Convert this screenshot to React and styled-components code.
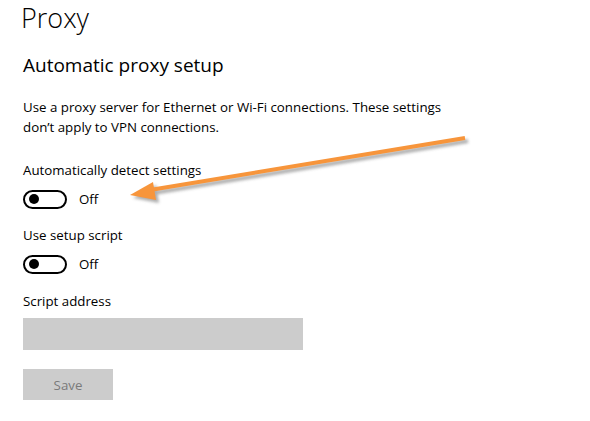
import React from "react"
import styled, { createGlobalStyle } from "styled-components"

const GlobalStyle = createGlobalStyle`
  * {
    margin: 0;
    padding: 0;
    box-sizing: border-box;
  }
  body {
    background: #ffffff;
    font-family: "Open Sans", "Noto Sans", sans-serif;
    color: #000000;
  }
`

const Page = styled.main`
  position: relative;
  width: 590px;
  height: 421px;
  padding: 0 0 0 23px;
  display: flex;
  flex-direction: column;
  align-items: flex-start;
  overflow: hidden;
`

const Title = styled.h1`
  font-size: 27px;
  font-weight: 300;
  line-height: 36px;
  margin-left: -2px;
`

const Subtitle = styled.h2`
  font-size: 19px;
  font-weight: 400;
  line-height: 26px;
  margin-top: 16px;
`

const Text = styled.p`
  font-size: 13.3px;
  line-height: 20px;
  margin-top: ${(p) => p.$top || 0}px;
  color: ${(p) => (p.$muted ? "#7a7a7a" : "#000")};
`

const ToggleRow = styled.div`
  display: flex;
  align-items: center;
  gap: 12px;
  margin-top: ${(p) => p.$top || 0}px;
`

const Track = styled.span`
  width: 44px;
  height: 19px;
  border: 2px solid #000;
  border-radius: 10px;
  display: flex;
  align-items: center;
  padding-left: 4px;
`

const Knob = styled.span`
  width: 10px;
  height: 10px;
  border-radius: 50%;
  background: #000;
`

const Input = styled.div`
  width: 280px;
  height: 32px;
  background: #cccccc;
  margin-top: 7px;
`

const Button = styled.button`
  width: 90px;
  height: 31px;
  border: none;
  background: #cccccc;
  color: #7a7a7a;
  font-family: inherit;
  font-size: 13.3px;
  margin-top: 19px;
`

const Arrow = styled.svg`
  position: absolute;
  left: 0;
  top: 0;
  pointer-events: none;
`

function Toggle({ top }) {
  return (
    <ToggleRow $top={top}>
      <Track>
        <Knob />
      </Track>
      <Text>Off</Text>
    </ToggleRow>
  )
}

export default function App() {
  return (
    <>
      <GlobalStyle />
      <Page>
        <Title>Proxy</Title>
        <Subtitle>Automatic proxy setup</Subtitle>
        <Text $top={19}>
          Use a proxy server for Ethernet or Wi-Fi connections. These settings
          <br />
          don’t apply to VPN connections.
        </Text>
        <Text $top={23}>Automatically detect settings</Text>
        <Toggle top={9} />
        <Text $top={16}>Use setup script</Text>
        <Toggle top={9} />
        <Text $top={17}>Script address</Text>
        <Input />
        <Button disabled>Save</Button>
        <Arrow width="590" height="421">
          <defs>
            <filter id="sh" x="-10%" y="-50%" width="120%" height="200%">
              <feGaussianBlur stdDeviation="1.5" />
            </filter>
          </defs>
          <g transform="translate(3 3)" fill="#9a9a9a" stroke="#9a9a9a" filter="url(#sh)" opacity="0.8">
            <line x1="465" y1="138" x2="150" y2="190" strokeWidth="4" />
            <polygon points="130,195 153,182 156,200" stroke="none" />
          </g>
          <line x1="465" y1="138" x2="150" y2="190" stroke="#f7953b" strokeWidth="4" />
          <polygon points="130,195 153,182 156,200" fill="#f7953b" />
        </Arrow>
      </Page>
    </>
  )
}
